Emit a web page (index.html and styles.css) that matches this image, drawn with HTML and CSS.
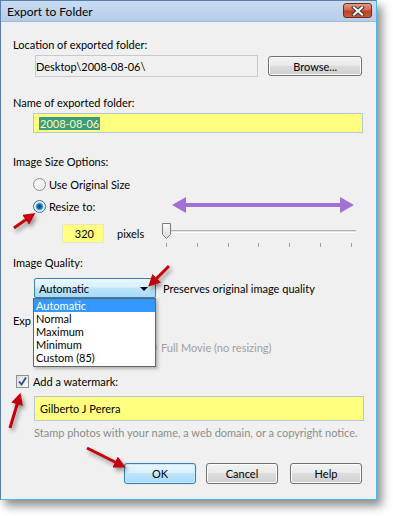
FILE: index.html
```html
<!DOCTYPE html>
<html>
<head>
<meta charset="utf-8">
<link rel="stylesheet" href="styles.css">
</head>
<body>
<div class="window">
  <div class="titlebar">
    <span class="title">Export to Folder</span>
    <span class="close">
      <svg width="14" height="10" viewBox="0 0 14 10">
        <path d="M3 1.5 L11 8.5 M11 1.5 L3 8.5" stroke="#3a3a3a" stroke-width="4" stroke-linecap="square"/>
        <path d="M3 1.5 L11 8.5 M11 1.5 L3 8.5" stroke="#ffffff" stroke-width="2" stroke-linecap="square"/>
      </svg>
    </span>
  </div>
  <div class="content">
    <div class="label l-loc">Location of exported folder:</div>
    <div class="loc-row">
      <div class="field readonly">Desktop\2008-08-06\</div>
      <div class="btn browse">Browse...</div>
    </div>
    <div class="label l-name">Name of exported folder:</div>
    <div class="field yellow name-field"><span class="sel">2008-08-06</span></div>
    <div class="label l-size">Image Size Options:</div>
    <div class="opt r1"><span class="radio"></span>Use Original Size</div>
    <div class="opt r2"><span class="radio on"></span>Resize to:</div>
    <div class="resize-row">
      <div class="field yellow px-field">320</div>
      <span class="pixels">pixels</span>
      <div class="slider">
        <div class="track"></div>
        <svg class="thumb" width="11" height="18" viewBox="0 0 11 18">
          <defs>
            <linearGradient id="tg" x1="0" y1="0" x2="0" y2="1">
              <stop offset="0" stop-color="#fbfbfb"/>
              <stop offset="1" stop-color="#d9d9d9"/>
            </linearGradient>
          </defs>
          <path d="M1.5 1.5 H9.5 V12.5 L5.5 16.5 L1.5 12.5 Z" fill="url(#tg)" stroke="#7a7a7a" stroke-width="1"/>
        </svg>
        <div class="ticks">
          <span></span><span></span><span></span><span></span><span></span><span></span><span></span>
        </div>
      </div>
    </div>
    <div class="label l-quality">Image Quality:</div>
    <div class="quality-row">
      <div class="combo">Automatic<span class="caret"></span></div>
      <span class="desc">Preserves original image quality</span>
    </div>
    <div class="label l-export"><span class="clip">Exp</span></div>
    <div class="opt movie"><span class="radio dis"></span><span class="dim">Full Movie (no resizing)</span></div>
    <div class="check-row"><span class="check">
      <svg width="11" height="11" viewBox="0 0 11 11"><path d="M2 5.5 L4.5 8.5 L9 1.5" fill="none" stroke="#2b4a9e" stroke-width="1.8"/></svg>
    </span>Add a watermark:</div>
    <div class="field yellow wm-field">Gilberto J Perera</div>
    <div class="hint">Stamp photos with your name, a web domain, or a copyright notice.</div>
    <div class="buttons">
      <div class="btn ok">OK</div>
      <div class="btn cancel">Cancel</div>
      <div class="btn help">Help</div>
    </div>
  </div>
  <ul class="droplist">
    <li class="hl">Automatic</li>
    <li>Normal</li>
    <li>Maximum</li>
    <li>Minimum</li>
    <li>Custom (85)</li>
  </ul>
</div>
<svg class="annot" width="393" height="516" viewBox="0 0 393 516">
  <defs>
    <marker id="rh" markerWidth="4" markerHeight="4" refX="2.2" refY="2" orient="auto" markerUnits="strokeWidth">
      <path d="M0 0 L4 2 L0 4 Z" fill="#c4000d"/>
    </marker>
  </defs>
  <g class="purple">
    <path d="M184 205 H341" stroke="#a171d6" stroke-width="4"/>
    <path d="M172 205 L186 197 L186 213 Z" fill="#a171d6"/>
    <path d="M354 205 L340 197 L340 213 Z" fill="#a171d6"/>
  </g>
  <g class="red">
    <path d="M14 228 L31 216" stroke="#c4000d" stroke-width="3" marker-end="url(#rh)"/>
    <path d="M169 266 L152 283" stroke="#c4000d" stroke-width="3" marker-end="url(#rh)"/>
    <path d="M10 428 L19 398" stroke="#c4000d" stroke-width="3" marker-end="url(#rh)"/>
    <path d="M87 448 L121 465" stroke="#c4000d" stroke-width="3" marker-end="url(#rh)"/>
  </g>
</svg>
</body>
</html>
```

FILE: styles.css
```css
* { box-sizing: border-box; }
html, body { margin: 0; padding: 0; background: #ffffff; }
body {
  width: 393px; height: 516px; position: relative; overflow: hidden;
  font-family: Lato, "Noto Sans", sans-serif; font-size: 11px; color: #000;
}
.window {
  position: relative;
  width: 377px; height: 500px;
  background: #f0f0f0;
  border: 1px solid #5b7fa8;
  border-right-color: #4fb8dc; border-bottom-color: #4fb8dc;
  box-shadow: 5px 6px 9px rgba(0,0,0,0.45);
  display: flex; flex-direction: column;
}
.titlebar {
  height: 21px; flex: none;
  background: linear-gradient(#c9dcf1, #b6cde8);
  border-bottom: 1px solid #9fb8d6;
  display: flex; align-items: center; justify-content: space-between;
  padding: 0 4px 0 6px;
}
.title { font-size: 12px; color: #000; }
.close {
  width: 29px; height: 15px; margin-top: -1px;
  border: 1px solid #6e2b1e; border-radius: 3px;
  background: linear-gradient(#e49a86 0%, #d4684f 45%, #c0401f 55%, #c95a3b 100%);
  display: flex; align-items: center; justify-content: center;
}
.content { flex: 1; display: flex; flex-direction: column; padding: 0 14px 0 12px; }
.label { height: 15px; line-height: 15px; white-space: nowrap; }
.l-loc { margin-top: 15px; }
.loc-row { margin-top: 3px; height: 22px; display: flex; align-items: center; padding-left: 22px; }
.field {
  border: 1px solid #abadb3; border-top-color: #9a9da3;
  background: #fff; display: flex; align-items: center; white-space: nowrap;
}
.readonly { width: 224px; height: 22px; background: #f0f0f0; border-color: #c9c9c9; padding-left: 0; }
.btn {
  height: 21px; width: 72px; border: 1px solid #707070; border-radius: 3px;
  background: linear-gradient(#f2f2f2 0%, #ebebeb 45%, #dddddd 50%, #cfcfcf 100%);
  box-shadow: inset 0 0 0 1px #fcfcfc;
  display: flex; align-items: center; justify-content: center;
}
.browse { width: 94px; height: 20px; margin-left: 10px; }
.l-name { margin-top: 18px; }
.name-field { margin-top: 3px; margin-left: 20px; width: 330px; height: 20px; padding-left: 5px; }
.yellow { background: #ffff80; border-color: #b7c7d8; }
.sel { background: #3c9a80; color: #fffbb0; padding: 0 1px; line-height: 13px; }
.l-size { margin-top: 21px; }
.opt { height: 15px; display: flex; align-items: center; padding-left: 20px; white-space: nowrap; }
.r1 { margin-top: 8px; }
.r2 { margin-top: 7px; }
.radio {
  width: 13px; height: 13px; border-radius: 50%; flex: none; margin-right: 3px;
  border: 1px solid #8e8f8f;
  background: radial-gradient(circle at 40% 35%, #ffffff 0%, #f0f0f0 45%, #d4d4d4 100%);
  box-shadow: inset 0 0 0 1px #f4f4f4;
}
.radio.on {
  border-color: #3a6ea5;
  background: radial-gradient(circle at 50% 50%, #0a3d6e 0%, #1a6fb8 30%, #5fb3ec 45%, #e8eef3 55%, #cfd6dc 100%);
}
.resize-row { margin-top: 9px; height: 20px; display: flex; align-items: center; padding-left: 49px; }
.px-field { width: 42px; height: 19px; justify-content: flex-end; padding-right: 9px; border-color: #e6e6c8; }
.pixels { width: 44px; margin-left: 13px; }
.slider { position: relative; width: 195px; height: 28px; align-self: flex-start; margin-top: -1px; }
.track {
  position: absolute; left: 6px; right: 0; top: 8px; height: 3px;
  border-top: 1px solid #b3b3b3; border-bottom: 1px solid #ffffff; background: #e3e3e3;
}
.thumb { position: absolute; left: 0; top: 0; }
.ticks { position: absolute; left: 5px; width: 186px; top: 21px; height: 4px; display: flex; justify-content: space-between; }
.ticks span { width: 1px; height: 4px; background: #a0a0a0; }
.l-quality { margin-top: 12px; }
.quality-row { margin-top: 8px; height: 20px; display: flex; align-items: center; padding-left: 21px; white-space: nowrap; }
.combo {
  width: 122px; height: 20px; border: 1px solid #3c7fb1; border-radius: 2px;
  background: linear-gradient(#eaf6fd 0%, #d9f0fc 45%, #bee6fd 50%, #a7d9f5 100%);
  display: flex; align-items: center; padding-left: 4px; position: relative;
}
.caret {
  position: absolute; right: 7px; top: 8px; width: 0; height: 0;
  border-left: 4px solid transparent; border-right: 4px solid transparent; border-top: 4px solid #000;
}
.desc { margin-left: 7px; }
.l-export { margin-top: 15px; }
.clip { display: inline-block; width: 21px; overflow: hidden; }
.movie { margin-top: 12px; padding-left: 131px; }
.radio.dis { border-color: #c0c0c0; background: #f4f4f4; margin-right: 4px; }
.dim { color: #a0a0a0; }
.check-row { margin-top: 19px; height: 15px; display: flex; align-items: center; padding-left: 3px; white-space: nowrap; }
.check {
  width: 13px; height: 13px; flex: none; margin-right: 4px;
  border: 1px solid #8e8f8f; background: linear-gradient(135deg, #dcdcdc, #f8f8f8);
  display: flex; align-items: center; justify-content: center;
}
.wm-field { margin-top: 7px; margin-left: 21px; width: 330px; height: 25px; padding-left: 5px; }
.hint { margin-top: 4px; margin-left: 21px; height: 15px; line-height: 15px; color: #8d8d8d; white-space: nowrap; }
.buttons { margin-top: 23px; display: flex; justify-content: flex-end; gap: 10px; }
.help { margin-left: 2px; }
.ok {
  border-color: #3c7fb1;
  background: linear-gradient(#eaf6fd 0%, #d9f0fc 45%, #bee6fd 50%, #a7d9f5 100%);
  box-shadow: inset 0 0 0 1px #c8eafc, 0 0 1px #6ec6f0;
}
.droplist {
  position: absolute; left: 32px; top: 297px; width: 123px; margin: 0; padding: 0 0 2px 0;
  list-style: none; background: #fff; border: 1px solid #646464;
  box-shadow: 2px 2px 3px rgba(0,0,0,0.25);
}
.droplist li { height: 13px; line-height: 13px; padding-left: 2px; }
.droplist li.hl { background: #3399ff; color: #fff; }
.annot { position: absolute; left: 0; top: 0; pointer-events: none; }
.red { filter: drop-shadow(2px 3px 2px rgba(0,0,0,0.4)); }
```
